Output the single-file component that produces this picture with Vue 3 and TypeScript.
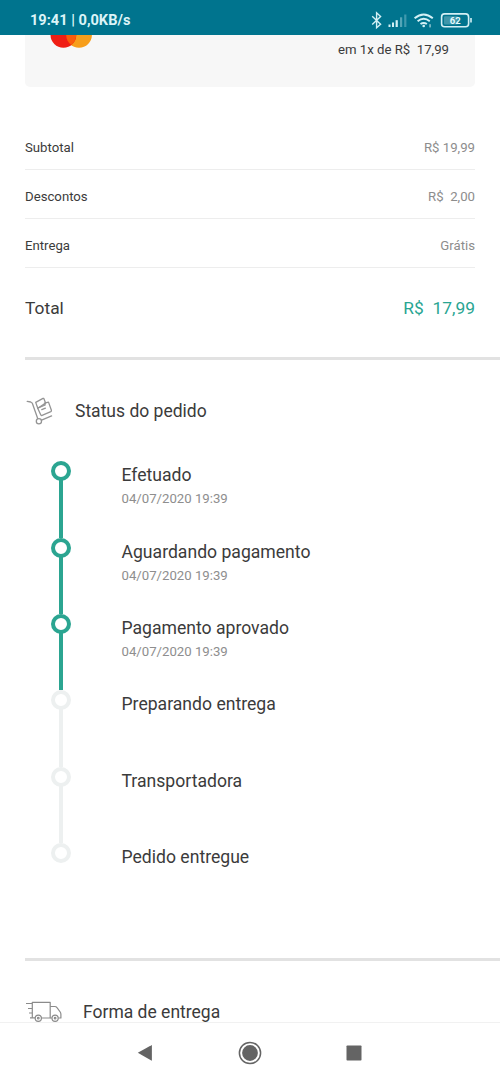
<script setup lang="ts">
interface Amount {
  label: string
  value: string
}

interface Step {
  title: string
  date?: string
  done: boolean
}

const amounts: Amount[] = [
  { label: 'Subtotal', value: 'R$ 19,99' },
  { label: 'Descontos', value: 'R$  2,00' },
  { label: 'Entrega', value: 'Grátis' },
]

const steps: Step[] = [
  { title: 'Efetuado', date: '04/07/2020 19:39', done: true },
  { title: 'Aguardando pagamento', date: '04/07/2020 19:39', done: true },
  { title: 'Pagamento aprovado', date: '04/07/2020 19:39', done: true },
  { title: 'Preparando entrega', done: false },
  { title: 'Transportadora', done: false },
  { title: 'Pedido entregue', done: false },
]
</script>

<template>
  <div class="screen">
    <header class="status-bar">
      <span class="clock">19:41 | 0,0KB/s</span>
      <svg class="indicators" width="106" height="20" viewBox="370 10 106 20" fill="none">
        <path d="M372.2 16.2l8.4 8-4 3.6V12.8l4 3.6-8.4 8" stroke="#d3f0f5" stroke-width="1.4" />
        <g fill="#d3f0f5">
          <rect x="388.5" y="24.5" width="2" height="2.5" />
          <rect x="392" y="22.5" width="2" height="4.5" />
          <rect x="395.6" y="20.2" width="2.2" height="6.8" />
          <rect x="400" y="17.3" width="2.2" height="9.7" opacity=".4" />
          <rect x="404.2" y="14.5" width="2.2" height="12.5" opacity=".3" />
        </g>
        <g stroke="#d3f0f5" stroke-width="1.9">
          <path d="M414.6 18.2q9.1-7.6 18.2 0" />
          <path d="M417.6 21.3q6.1-5 12.2 0" />
          <path d="M420.5 24.1q3.2-2.3 6.4 0" />
        </g>
        <circle cx="423.7" cy="26" r="1.3" fill="#d3f0f5" />
        <rect x="429.3" y="24.2" width="1.5" height="3.2" fill="#8ec5d0" />
        <rect x="441.6" y="13.9" width="27" height="12.8" rx="3" stroke="#d3f0f5" stroke-width="1.6" />
        <rect x="444" y="16.2" width="14" height="8.2" rx="1" fill="#3f96a9" />
        <path d="M471 18v4.6" stroke="#d3f0f5" stroke-width="1.6" />
        <text x="455.2" y="24" class="charge" text-anchor="middle">62</text>
      </svg>
    </header>

    <main class="content">
      <section class="card">
        <svg class="brand" width="42" height="13" viewBox="50 35 42 13">
          <circle cx="79" cy="34.8" r="12.9" fill="#f79e1b" />
          <circle cx="63.4" cy="34.8" r="12.9" fill="#f01e14" />
          <path d="M71.2 24.6a12.9 12.9 0 0 1 0 20.4a12.9 12.9 0 0 1 0-20.4z" fill="#fb5c0a" />
        </svg>
        <span class="installments">em 1x de R$&nbsp; 17,99</span>
      </section>

      <section class="amounts">
        <div v-for="item in amounts" :key="item.label" class="amount">
          <span>{{ item.label }}</span>
          <span class="value">{{ item.value }}</span>
        </div>
        <div class="total">
          <span>Total</span>
          <span class="price">R$&nbsp; 17,99</span>
        </div>
      </section>

      <section class="order-status">
        <h2 class="heading">
          <svg width="28" height="30" viewBox="26 396 28 30" fill="none" stroke="#949494" stroke-width="1.3" stroke-linejoin="round" stroke-linecap="round">
            <path d="M27.2 401.3l3.5.7q1.3.4 1.8 1.8l5.2 14.7" />
            <circle cx="38.9" cy="421.2" r="2.6" />
            <path d="M41.6 420.2l10-4.3" />
            <path d="M37.8 408.3l-2.1-5.9 7.3-4q.7-.3 1 .5l1.6 4.2-7.8 5.2z" />
            <path d="M37.6 408.1l7.6-3.1-.7-1.8 4-1.1 2.9 8.1q.3.9-.6 1.4l-8.7 3.8q-1 .4-1.4-.6z" />
            <path d="M41.8 409.7l3.6-1.5" />
          </svg>
          <span>Status do pedido</span>
        </h2>
        <ol class="timeline">
          <li v-for="step in steps" :key="step.title" class="step" :class="{ done: step.done }">
            <div class="marker">
              <span class="dot"></span>
              <span class="line"></span>
            </div>
            <div class="details">
              <p class="title">{{ step.title }}</p>
              <p v-if="step.date" class="date">{{ step.date }}</p>
            </div>
          </li>
        </ol>
      </section>

      <section class="delivery">
        <h2 class="heading">
          <svg width="38" height="24" viewBox="25 1000 38 24" fill="none" stroke="#8b8b8b" stroke-width="1.2" stroke-linejoin="round">
            <path d="M26 1003.5h6M28 1008.5h4M29 1013h3M30 1017.8h5" />
            <path d="M32.3 1017.8v-15.5h17.9v15.7h-9" />
            <path d="M50.2 1006.5h4.6q1.4 0 2.2 1.2l3.2 4.3q.7 1 .7 2.2v3.8h-2.5M50.2 1018h1.6" />
            <circle cx="38.3" cy="1018.2" r="3.1" />
            <circle cx="38.3" cy="1018.2" r=".8" />
            <circle cx="55.1" cy="1018.2" r="3.1" />
            <circle cx="55.1" cy="1018.2" r=".8" />
          </svg>
          <span>Forma de entrega</span>
        </h2>
      </section>
    </main>

    <nav class="nav-bar">
      <svg width="16" height="18" viewBox="0 0 16 18"><path d="M.8 8.8L14.3 1.2q.6-.3.6.4v14.6q0 .7-.6.4z" fill="#646464" /></svg>
      <svg width="24" height="24" viewBox="0 0 24 24">
        <circle cx="12" cy="12" r="10.6" fill="none" stroke="#646464" stroke-width="1.5" />
        <circle cx="12" cy="12" r="7.9" fill="#646464" />
      </svg>
      <svg width="16" height="16" viewBox="0 0 16 16"><rect x=".5" y=".5" width="15" height="15" rx=".8" fill="#646464" /></svg>
    </nav>
  </div>
</template>

<style>
body {
  margin: 0;
  background: #fff;
}
</style>

<style scoped>
.screen {
  display: flex;
  flex-direction: column;
  width: 500px;
  height: 1082px;
  overflow: hidden;
  background: #fff;
  color: #3b3b3b;
  font-family: Roboto, "Liberation Sans", sans-serif;
  font-size: 13.2px;
}

.status-bar {
  box-sizing: border-box;
  display: flex;
  flex: none;
  justify-content: space-between;
  height: 35px;
  padding: 10px 24px 0 30px;
  background: #00748e;
}

.clock {
  color: #dcf4f8;
  font-size: 14.6px;
  font-weight: 700;
  line-height: 21px;
  white-space: nowrap;
}

.charge {
  fill: #e6fafd;
  font-size: 9.5px;
  font-weight: 700;
}

.content {
  flex: none;
  height: 987px;
  overflow: hidden;
}

.card {
  box-sizing: border-box;
  display: flex;
  justify-content: space-between;
  height: 52px;
  margin: 0 25px;
  padding: 0 26px 0 25px;
  border-radius: 0 0 5px 5px;
  background: #f7f7f7;
}

.installments {
  line-height: 29px;
}

.amounts {
  padding: 34px 25px 0;
}

.amount {
  box-sizing: border-box;
  display: flex;
  align-items: center;
  justify-content: space-between;
  height: 49px;
  padding-top: 5px;
  border-bottom: 1px solid #ededed;
}

.value {
  color: #8d8d8d;
  white-space: pre;
}

.total {
  box-sizing: border-box;
  display: flex;
  align-items: center;
  justify-content: space-between;
  height: 89px;
  padding-bottom: 9px;
  font-size: 17.4px;
}

.price {
  color: #29a592;
}

.order-status {
  box-sizing: border-box;
  height: 601px;
  margin-left: 25px;
  border-top: 3px solid #e2e2e2;
}

.heading {
  display: flex;
  align-items: center;
  gap: 21px;
  height: 30px;
  margin: 0;
  font-size: 17.5px;
  font-weight: 400;
}

.order-status .heading {
  padding: 36px 0 0 1px;
}

.timeline {
  margin: 0;
  padding: 35.4px 0 0 25.5px;
  list-style: none;
}

.step {
  display: flex;
  gap: 51px;
  height: 76.3px;
}

.marker {
  display: flex;
  flex-direction: column;
  align-items: center;
  width: 20px;
  color: #edf0f0;
}

.done .marker {
  color: #2ba591;
}

.dot {
  box-sizing: border-box;
  width: 20px;
  height: 20px;
  border: 4px solid currentColor;
  border-radius: 50%;
}

.line {
  flex: 1;
  width: 4px;
  margin-top: -1px;
  background: currentColor;
}

.step:last-child .line {
  display: none;
}

.title,
.date {
  margin: 0;
  white-space: nowrap;
}

.title {
  padding-top: 2px;
  font-size: 17.6px;
  line-height: 24px;
}

.date {
  color: #8e8e8e;
  font-size: 13.2px;
  line-height: 24px;
}

.delivery {
  margin-left: 25px;
  border-top: 3px solid #e2e2e2;
}

.delivery .heading {
  gap: 20px;
  padding-top: 36px;
}

.nav-bar {
  box-sizing: border-box;
  display: flex;
  flex: none;
  align-items: center;
  justify-content: space-between;
  height: 60px;
  padding: 0 138px 0 137px;
  border-top: 1px solid #f1f1f1;
  background: #fff;
}
</style>
